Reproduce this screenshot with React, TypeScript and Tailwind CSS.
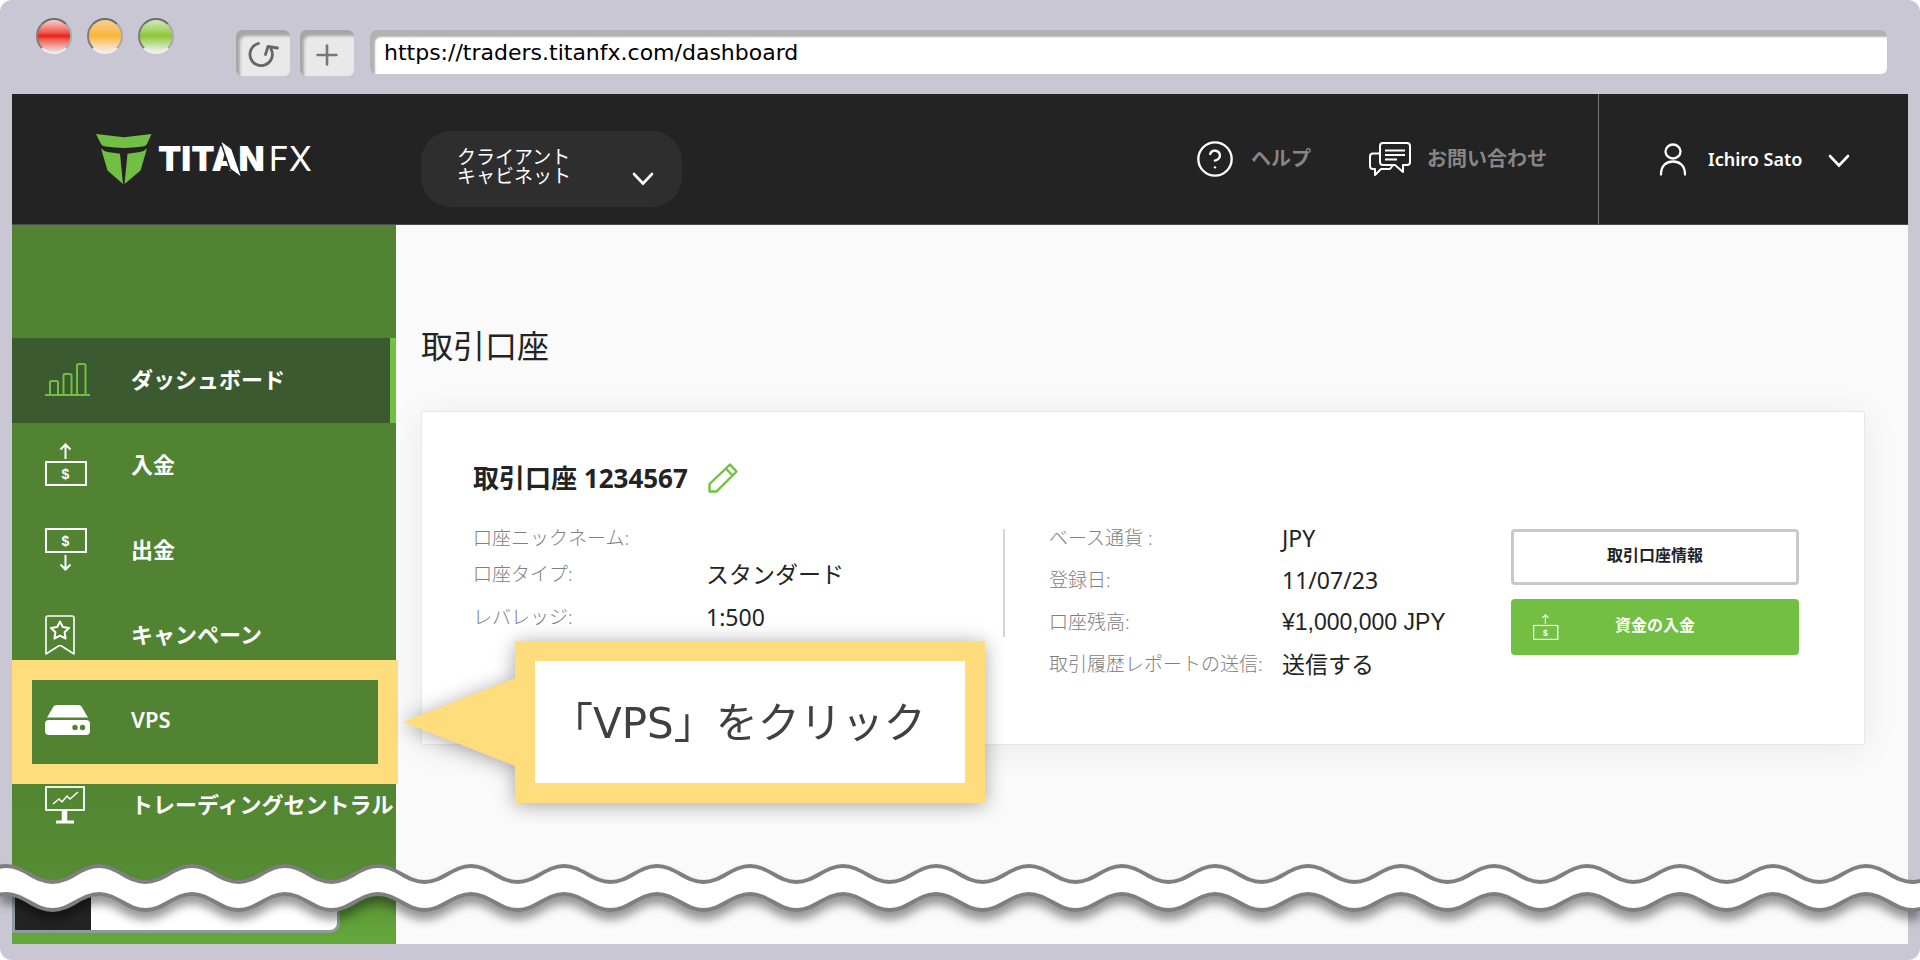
import type { ReactNode } from "react";
import { HelpCircle } from "lucide-react";

function Bill({ size, down }: { size: number; down?: boolean }) {
  return (
    <svg width={size} height={size} viewBox="0 0 43 43" fill="none" stroke="currentColor" strokeWidth="2">
      {down ? (
        <path d="M20.5 27v14M15.500 36.500l5 5 5-5" />
      ) : (
        <path d="M20.5 16V2M15.500 6.500l5-5 5 5" />
      )}
      <rect x="1" y={down ? 1 : 19} width="40" height="23" />
      <text
        x="20.5"
        y={down ? 18 : 36}
        textAnchor="middle"
        fontSize="14"
        fontWeight="700"
        fontFamily="Liberation Sans, sans-serif"
        fill="currentColor"
        stroke="none"
      >
        $
      </text>
    </svg>
  );
}

function BarsIcon() {
  return (
    <svg width="45" height="33" viewBox="0 0 45 33" fill="none" stroke="#72bf44" strokeWidth="2">
      <path d="M0 32h45M5 32V19.500q0-1.500 1.500-1.500h5q1.500 0 1.500 1.500V32M18.500 32V12.500q0-1.500 1.500-1.500h5q1.500 0 1.500 1.500V32M32 32V2.500q0-1.500 1.500-1.500h5.500q1.500 0 1.500 1.500V32" />
    </svg>
  );
}

function BookmarkIcon() {
  return (
    <svg width="30" height="40" viewBox="0 0 30 40" fill="none" stroke="currentColor" strokeWidth="1.6" strokeLinejoin="round">
      <path d="M1 39V3q0-2 2-2h24q2 0 2 2v36L16.500 31q-1.500-1-3 0z" />
      <path d="M15 6.500l2.800 5.500 6.200 1-4.400 4.300 1 6.200L15 20.600l-5.600 2.900 1-6.200L6 13l6.200-1z" strokeWidth="2" />
    </svg>
  );
}

function DriveIcon() {
  return (
    <svg width="45" height="30" viewBox="0 0 45 30" fill="currentColor">
      <path d="M11.500 0h22q2 0 3 1.500L43 12.500H2L8.500 1.500Q9.500 0 11.500 0z" />
      <rect y="15" width="45" height="15" rx="4" />
      <circle cx="30" cy="22.5" r="2.7" fill="#518332" />
      <circle cx="37.5" cy="22.5" r="2.7" fill="#518332" />
    </svg>
  );
}

function MonitorIcon() {
  return (
    <svg width="40" height="38" viewBox="0 0 40 38" fill="none" stroke="currentColor" strokeWidth="1.8">
      <rect x="1" y="1" width="38" height="23" />
      <path d="M8 18l6-5 3 3 5-6 3 3 8-7" strokeWidth="1.5" />
      <path d="M19.500 24v11" strokeWidth="5.5" />
      <path d="M11 36h18" strokeWidth="3" />
    </svg>
  );
}

function Chevron() {
  return (
    <svg width="22" height="14" viewBox="0 0 22 14" fill="none" stroke="#fff" strokeWidth="2.6" strokeLinecap="round">
      <path d="M2 2l9 9.500L20 2" />
    </svg>
  );
}

function Logo() {
  return (
    <a href="#home" aria-label="TITANFX" className="flex items-center gap-[6px] text-white">
      <svg width="56" height="51" viewBox="0 0 56 51" fill="#72bf44">
        <path d="M0 0l28 3.300L55.500 0 51 10q-1 2-4.500 2.600-18.500 2.600-37 0Q6 12 5 10z" />
        <path d="M5 14.500q3 3 7 3.500l12 1.800L27 50 11.500 36.500z" />
        <path d="M51 14.500q-3 3-7 3.500l-12.500 1.800L28.500 50 44.500 36.500z" />
      </svg>
      <span className="flex font-['Inter',sans-serif] text-[34px] leading-[40px]">
        <span className="relative font-black">
          TITAN
          {/* blade across the A */}
          <svg className="absolute top-0 left-[61px]" width="24" height="40" viewBox="0 0 24 40" aria-hidden="true">
            <path d="M1 1l12 9 10 29-12-9z" fill="#fff" stroke="#232323" strokeWidth="1.5" />
          </svg>
        </span>
        <span className="pl-1">FX</span>
      </span>
    </a>
  );
}

const NAV: { label: string; icon: ReactNode; active?: boolean; marked?: boolean }[] = [
  { label: "ダッシュボード", icon: <BarsIcon />, active: true },
  { label: "入金", icon: <Bill size={43} /> },
  { label: "出金", icon: <Bill size={43} down /> },
  { label: "キャンペーン", icon: <BookmarkIcon /> },
  { label: "VPS", icon: <DriveIcon />, marked: true },
  { label: "トレーディングセントラル", icon: <MonitorIcon /> },
];

const LEFT_ROWS = [
  { label: "口座ニックネーム:", value: "", height: "h-[42px]" },
  { label: "口座タイプ:", value: "スタンダード", height: "h-[30px]" },
  { label: "レバレッジ:", value: "1:500", height: "h-[56px]" },
];

const RIGHT_ROWS = [
  { label: "ベース通貨 :", value: "JPY" },
  { label: "登録日:", value: "11/07/23" },
  { label: "口座残高:", value: "¥1,000,000 JPY", arial: true },
  { label: "取引履歴レポートの送信:", value: "送信する" },
];

function Row({ label, value, height, arial }: { label: string; value: string; height: string; arial?: boolean }) {
  return (
    <div className={`flex items-center whitespace-nowrap ${height}`}>
      <dt className="w-[233px] shrink-0 text-[19px] font-light text-[#808080]">{label}</dt>
      <dd className={`text-[23px] text-[#232323] ${arial ? "font-['Liberation_Sans',sans-serif]" : ""}`}>{value}</dd>
    </div>
  );
}

function Callout() {
  return (
    <div className="absolute -top-[37px] left-[391px] z-20 flex items-center drop-shadow-[0_2px_10px_rgba(0,0,0,0.35)]">
      <svg width="112" height="88" viewBox="0 0 112 88" fill="#ffdd7c">
        <path d="M0 44L112 0v88z" />
      </svg>
      <p className="h-[162px] w-[470px] border-20 border-[#ffdd7c] bg-white pt-1 pl-4 font-['DejaVu_Sans','Noto_Sans_CJK_JP',sans-serif] text-[42px] leading-[118px] whitespace-nowrap text-[#404040]">
        「VPS」をクリック
      </p>
    </div>
  );
}

// one wave is 93px wide, crests and troughs 16px apart
const wave = (y: number) => {
  let d = `M-87 ${y}`;
  for (let i = 0; i < 44; i++) d += "c18 0 28.5 16 46.5 16s28.500-16 46.5-16";
  return d;
};

function TornEdge() {
  return (
    <svg
      className="absolute inset-x-0 bottom-[34px] z-30 h-[80px] w-full drop-shadow-[0_8px_5px_rgba(0,0,0,0.4)]"
      aria-hidden="true"
    >
      <clipPath id="band">
        <path d={`${wave(48)}V0H-87z`} />
      </clipPath>
      <path d={`${wave(20)}V80H-87z`} fill="#fff" clipPath="url(#band)" />
      <path d={wave(20)} fill="none" stroke="#7f7f7f" strokeWidth="4" />
      <path d={wave(48)} fill="none" stroke="#7f7f7f" strokeWidth="4" />
    </svg>
  );
}

function BrowserBar() {
  const dot = "size-9 rounded-full border-2 border-t-[#6e6e6e] border-l-[#7d7d7d] border-r-[#a9a9ae] border-b-[#eeeef2]";
  const button =
    "flex h-[46px] w-[54px] items-center justify-center rounded-md bg-[#e9e9e9] pt-1 shadow-[inset_4px_6px_3px_#a6a6a6]";
  return (
    <div className="flex h-[94px] items-start pr-[33px] pl-9">
      <div className="flex gap-[15px] pt-[18px]">
        <span className={`${dot} bg-linear-to-b from-[#f3cfcd] via-[#e8171b] to-[#ecdcdc]`} />
        <span className={`${dot} bg-linear-to-b from-[#f6cf90] via-[#fdb62f] to-[#f2ede4]`} />
        <span className={`${dot} bg-linear-to-b from-[#d0e8bc] via-[#8fc626] to-[#eef4ea]`} />
      </div>
      <div className="ml-[62px] flex gap-[10px] pt-[30px]">
        <button className={button} aria-label="Reload">
          <svg width="32" height="26" viewBox="0 0 32 26" fill="none" stroke="#666" strokeWidth="2.8" strokeLinecap="round" strokeLinejoin="round">
            <path d="M11.500 1.500A11.200 11.200 0 1 0 24 7" />
            <path d="M18.500 12.500L21 4.500l9.500 1.500" />
          </svg>
        </button>
        <button className={button} aria-label="New tab">
          <svg width="22" height="22" viewBox="0 0 22 22" stroke="#777" strokeWidth="2.6" strokeLinecap="round">
            <path d="M11 1.500v19M1.500 11h19" />
          </svg>
        </button>
      </div>
      <input
        aria-label="Address"
        defaultValue="https://traders.titanfx.com/dashboard"
        className="mt-[30px] ml-4 h-[44px] min-w-0 flex-1 rounded-md bg-white pl-[14px] font-['DejaVu_Sans',sans-serif] text-[22px] text-black shadow-[inset_5px_7px_2px_#b2b2b2] outline-none"
      />
    </div>
  );
}

function TopBar() {
  return (
    <header className="flex h-[131px] items-center border-b border-[#4a4a4a] bg-[#232323]">
      <div className="w-[409px] shrink-0 pl-[84px]">
        <Logo />
      </div>
      <button className="mt-5 flex h-[76px] w-[261px] items-center rounded-[30px] bg-[#2e2e2e] pl-9 text-left text-[19px] leading-[19px] text-white">
        <span className="w-[175px] pb-1">
          クライアント
          <br />
          キャビネット
        </span>
        <span className="pt-5">
          <Chevron />
        </span>
      </button>
      <div className="ml-auto flex items-center text-[20px] font-bold whitespace-nowrap text-[#868686]">
        <a href="#help" className="flex items-center gap-4">
          <HelpCircle size={40} strokeWidth={1.4} color="#fff" />
          ヘルプ
        </a>
        <a href="#contact" className="ml-[58px] flex items-center gap-4">
          <svg width="42" height="34" viewBox="0 0 42 34" fill="none" stroke="#fff" strokeWidth="2" strokeLinejoin="round">
            <path d="M14 1h24q3 0 3 3v16q0 3-3 3h-4v7l-8-7H14q-3 0-3-3V4q0-3 3-3z" />
            <path d="M11 11.500H4q-3 0-3 3V24q0 3 3 3h2v6l6-6h9l3-4M16 8.500h20M16 13h20M16 17.500h12" />
          </svg>
          お問い合わせ
        </a>
      </div>
      <button className="ml-[51px] flex h-full w-[310px] items-center border-l border-[#777] pl-[60px] text-[18px] font-semibold text-white">
        <svg width="28" height="33" viewBox="0 0 28 33" fill="none" stroke="#fff" strokeWidth="2.3" strokeLinecap="round">
          <ellipse cx="14" cy="8.5" rx="7.5" ry="7" />
          <path d="M2 31.500C2 22 8 18.500 14 18.500S26 22 26 31.500" />
        </svg>
        <span className="mr-[26px] ml-[21px] whitespace-nowrap">Ichiro Sato</span>
        <span className="pt-1">
          <Chevron />
        </span>
      </button>
    </header>
  );
}

function Sidebar() {
  return (
    <aside className="relative z-10 w-[384px] shrink-0 bg-linear-to-b from-[#518332] from-75% via-[#568c33] via-90% to-[#64a83b] pt-[113px]">
      <nav>
        {NAV.map((item) => (
          <div key={item.label} className="relative">
            <a
              href="#"
              className={`flex h-[85px] items-center pb-[2px] pl-[33px] text-[22px] font-bold whitespace-nowrap text-white ${
                item.active ? "border-r-[6px] border-[#72bf44] bg-[#3c5a2f]" : ""
              }`}
            >
              <span className="w-[86px] shrink-0">{item.icon}</span>
              <span className={item.marked ? "font-semibold" : ""}>{item.label}</span>
            </a>
            {item.marked && (
              <>
                <div className="pointer-events-none absolute -top-[18px] -right-[2px] -bottom-[21px] left-0 z-10 border-20 border-[#ffdd7c]" />
                <Callout />
              </>
            )}
          </div>
        ))}
      </nav>
      <div className="absolute bottom-[11px] left-0 flex h-[44px] w-[328px] overflow-hidden rounded-br-[10px] border-3 border-[#8f9c9f] bg-white">
        <div className="w-[76px] bg-[#232323]" />
      </div>
    </aside>
  );
}

function AccountCard() {
  return (
    <section className="rounded-xs border border-[#e8e8e8] bg-white pt-[46px] pr-[65px] pb-[59px] pl-[51px] shadow-[0_4px_36px_rgba(0,0,0,0.07)]">
      <div className="flex h-[40px] items-center gap-5">
        <h2 className="text-[26px] font-bold text-[#232323]">取引口座 1234567</h2>
        <button aria-label="Edit">
          <svg width="30" height="30" viewBox="0 0 30 30" fill="none" stroke="#72bf44" strokeWidth="2.4" strokeLinejoin="round">
            <path d="M1.500 28.500v-7.500L22 1.500l6.500 7L8.500 28.500zM18 5.500l6.500 7" />
          </svg>
        </button>
      </div>
      <div className="grid grid-cols-[minmax(0,532fr)_minmax(0,506fr)_288px] pt-[19px]">
        <div className="relative">
          <dl>
            {LEFT_ROWS.map((row) => (
              <Row key={row.label} {...row} />
            ))}
          </dl>
          <div className="absolute top-3 right-0 h-[108px] w-[2px] bg-[#d4d4d4]" />
        </div>
        <dl className="pl-[44px]">
          {RIGHT_ROWS.map((row) => (
            <Row key={row.label} {...row} height="h-[42px]" />
          ))}
        </dl>
        <div className="flex flex-col gap-[14px] pt-3 text-base font-bold">
          <button className="h-[56px] rounded border-3 border-[#c8c8c8] pb-1 text-[#232323]">取引口座情報</button>
          <button className="flex h-[56px] items-center rounded bg-[#72bf44] pl-[22px] text-white">
            <Bill size={26} />
            <span className="flex-1 pr-[48px] pb-1">資金の入金</span>
          </button>
        </div>
      </div>
    </section>
  );
}

export default function App() {
  return (
    <div className="bg-white font-['Noto_Sans','Noto_Sans_CJK_JP',sans-serif]">
      <div className="relative flex min-h-screen flex-col overflow-hidden rounded-xl bg-[#c8c7d3]">
        <BrowserBar />
        <div className="mx-3 mb-4 flex flex-1 flex-col bg-[#fafafa]">
          <TopBar />
          <div className="flex flex-1">
            <Sidebar />
            <main className="min-w-0 flex-1 pt-[96px] pr-[43px] pl-[25px]">
              <h1 className="mb-[40px] text-[32px] leading-[50px] text-[#232323]">取引口座</h1>
              <AccountCard />
            </main>
          </div>
        </div>
        <TornEdge />
      </div>
    </div>
  );
}
